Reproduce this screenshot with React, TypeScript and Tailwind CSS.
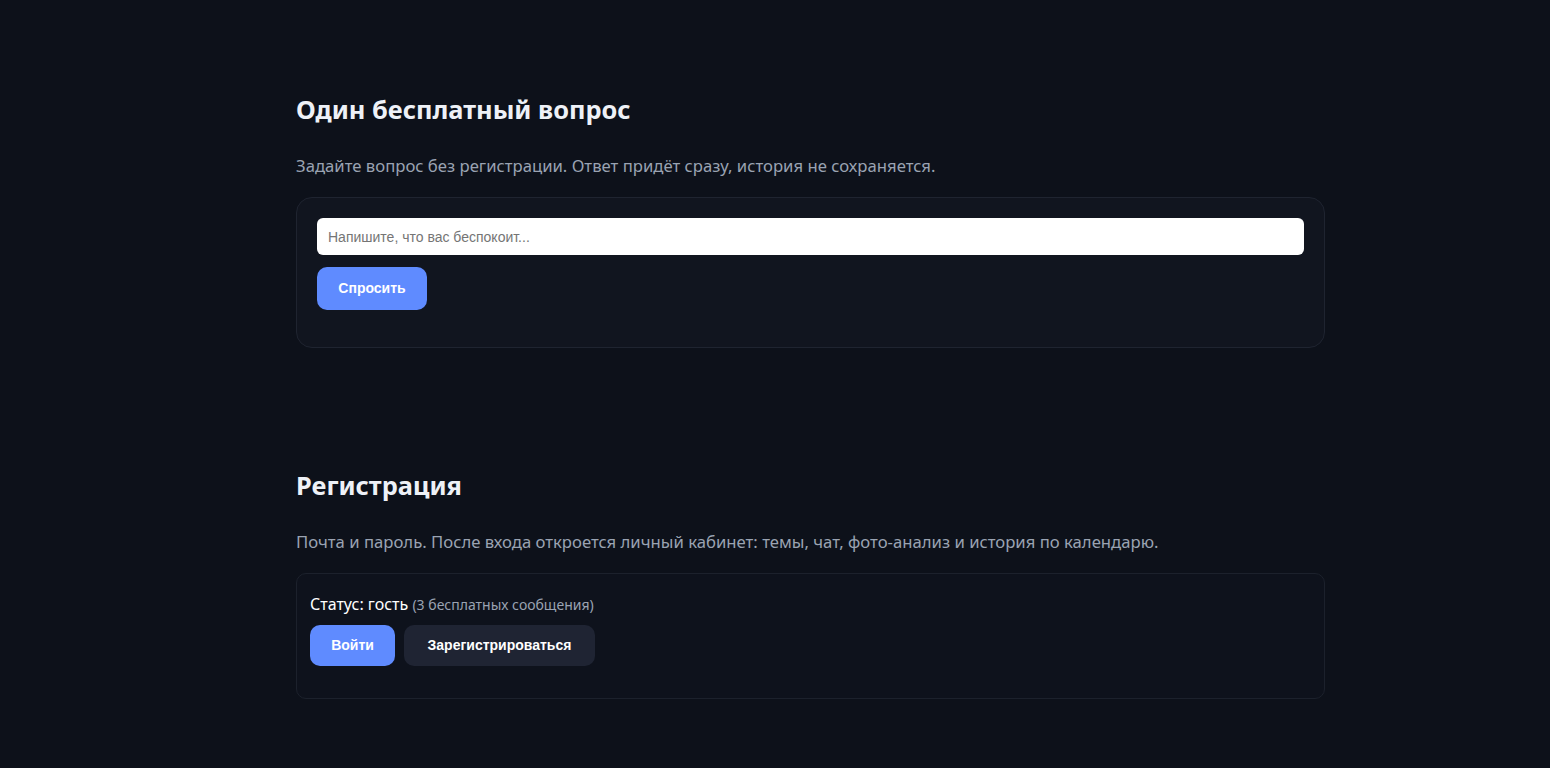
export default function App() {
  return (
    <div className="min-h-screen w-full bg-[#0d111a] font-['Noto_Sans',sans-serif] text-[#e6e9f0]">
      <div className="pl-[296px] pt-[87px] pb-[70px]">
        <div className="w-[1029px]">
          {/* Free question */}
          <section>
            <h2 className="text-[25.4px] font-bold leading-[44px] text-[#eef1f7]">Один бесплатный вопрос</h2>
            <p className="mt-[22px] text-[16.7px] leading-[26px] text-[#9aa3b2]">
              Задайте вопрос без регистрации. Ответ придёт сразу, история не сохраняется.
            </p>
            <div className="mt-[18px] rounded-[16px] border border-[#1f2430] bg-[#11151f] px-[20px] pt-[20px] pb-[37px]">
              <input
                className="block h-[37px] w-full rounded-[6px] bg-white px-[11px] font-['Liberation_Sans',sans-serif] text-[14px] text-[#111] placeholder:text-[#757575] outline-none"
                placeholder="Напишите, что вас беспокоит..."
              />
              <button className="mt-[12px] h-[43px] w-[110px] rounded-[10px] bg-[#5f8bff] font-['Liberation_Sans',sans-serif] text-[14px] font-bold text-white">
                Спросить
              </button>
            </div>
          </section>

          {/* Registration */}
          <section className="mt-[115px]">
            <h2 className="text-[25.4px] font-bold leading-[44px] text-[#eef1f7]">Регистрация</h2>
            <p className="mt-[22px] text-[16.7px] leading-[26px] text-[#9aa3b2]">
              Почта и пароль. После входа откроется личный кабинет: темы, чат, фото-анализ и история по календарю.
            </p>
            <div className="mt-[18px] rounded-[10px] border border-[#1c212c] bg-[#0e121c] px-[13px] pt-[19px] pb-[32px]">
              <div className="text-[16px] leading-[22px] text-white">
                Статус: гость <span className="text-[14px] text-[#9aa3b2]">(3 бесплатных сообщения)</span>
              </div>
              <div className="mt-[9px] flex gap-[9px] font-['Liberation_Sans',sans-serif]">
                <button className="h-[41px] w-[85px] rounded-[10px] bg-[#5f8bff] text-[14px] font-bold text-white">
                  Войти
                </button>
                <button className="h-[41px] w-[191px] rounded-[10px] bg-[#1f2433] text-[14px] font-bold text-white">
                  Зарегистрироваться
                </button>
              </div>
            </div>
          </section>
        </div>
      </div>
    </div>
  );
}
